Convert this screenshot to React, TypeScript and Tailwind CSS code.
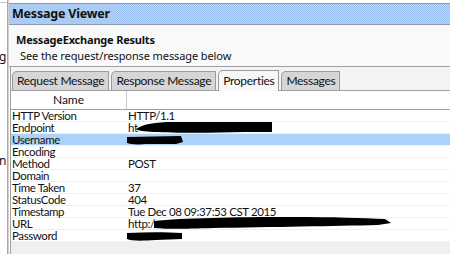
import React from "react";

const rows: { name: string; value: string; sel?: boolean; redact?: "endpoint" | "user" | "url" | "pass" }[] = [
  { name: "HTTP Version", value: "HTTP/1.1" },
  { name: "Endpoint", value: "ht", redact: "endpoint" },
  { name: "Username", value: "", sel: true, redact: "user" },
  { name: "Encoding", value: "" },
  { name: "Method", value: "POST" },
  { name: "Domain", value: "" },
  { name: "Time Taken", value: "37" },
  { name: "StatusCode", value: "404" },
  { name: "Timestamp", value: "Tue Dec 08 09:37:53 CST 2015" },
  { name: "URL", value: "http:/", redact: "url" },
  { name: "Password", value: "", redact: "pass" },
];

function Redaction({ kind }: { kind: string }) {
  if (kind === "endpoint")
    return (
      <svg className="absolute left-[8px] top-[-2px]" width="140" height="14" viewBox="0 0 140 14">
        <path d="M2 9 C10 4 20 2 40 2 L138 2 L138 12 L110 12 C80 13 40 13 20 12 C10 11 4 11 2 9 Z" fill="#000" />
      </svg>
    );
  if (kind === "user")
    return (
      <svg className="absolute left-[0px] top-[1px]" width="60" height="11" viewBox="0 0 60 11">
        <path d="M1 2 L55 1 L57 7 L50 9 L20 9 C10 10 4 9 1 8 Z" fill="#000" />
      </svg>
    );
  if (kind === "url")
    return (
      <svg className="absolute left-[27px] top-[-3px]" width="242" height="16" viewBox="0 0 242 16">
        <path d="M1 6 C30 3 80 2 140 2 C180 2 210 3 232 4 L238 8 L225 10 C180 11 120 12 60 13 C30 14 8 14 1 13 Z" fill="#000" />
      </svg>
    );
  return (
    <svg className="absolute left-[0px] top-[1px]" width="58" height="11" viewBox="0 0 58 11">
      <path d="M1 2 C20 1 40 1 56 2 L56 8 L30 9 C15 10 5 10 1 8 Z" fill="#000" />
    </svg>
  );
}

export default function App() {
  return (
    <div
      className="w-[450px] h-[254px] flex bg-white overflow-hidden text-[#111]"
      style={{ fontFamily: '"Noto Sans", "Open Sans", sans-serif' }}
    >
      {/* left neighbour pane */}
      <div className="w-[8px] shrink-0 flex flex-col border-r border-[#a8a8a8] bg-white overflow-hidden">
        <div className="h-[3px] border-b border-[#c8c8c8]" />
        <div className="h-[48px]" />
        <div className="text-[12px] leading-[12px] -ml-[1px]">g</div>
        <div className="h-[92px]" />
        <div className="text-[12px] leading-[12px] -ml-[1px]">n</div>
      </div>

      {/* main window */}
      <div className="flex-1 flex flex-col border-l border-[#d0d0d0] min-w-0">
        <div className="h-[3px] bg-white" />
        {/* title bar */}
        <div className="h-[22px] flex items-center border-t border-b border-[#8c9aae] bg-[repeating-conic-gradient(#95bdef_0_25%,#c2daf7_0_50%)] bg-[length:2px_2px]">
          <div className="h-full flex items-center pl-[3px] pr-[6px] bg-[#abcbf2] text-[12.5px] font-bold tracking-[-0.2px]">
            Message Viewer
          </div>
        </div>
        {/* description */}
        <div className="h-[42px] bg-[#f9f9f9] flex flex-col pl-[7px] border-b border-[#a0a0a0]">
          <div className="mt-[8px] text-[11px] leading-[14px] font-bold tracking-[-0.2px]">MessageExchange Results</div>
          <div className="mt-[2px] pl-[4px] text-[11px] leading-[14px] tracking-[-0.1px]">See the request/response message below</div>
        </div>

        {/* tab panel */}
        <div
          className="flex-1 flex flex-col ml-[1px] border-l border-[#a0a0a0] bg-[#f3f3f3]"
          style={{ fontFamily: 'Lato, "Noto Sans", sans-serif' }}
        >
          <div className="h-[24px] flex items-end pl-[1px] border-b border-[#a0a0a0]">
            {["Request Message", "Response Message", "Properties", "Messages"].map((t) => {
              const sel = t === "Properties";
              return (
                <div
                  key={t}
                  className={
                    "relative mr-[2px] flex items-center px-[4px] text-[12px] tracking-[-0.3px] leading-[14px] border border-b-0 border-[#9a9a9a] rounded-tl-[5px] " +
                    (sel ? "h-[21px] bg-[#f7f7f7] -mb-[1px]" : "h-[19px] bg-[#d6d6d6]")
                  }
                >
                  {t}
                </div>
              );
            })}
          </div>

          {/* table */}
          <div className="flex flex-col bg-white">
            <div className="h-[19px] flex border-b border-[#a0a0a0]">
              <div className="w-[115px] shrink-0 flex items-center justify-center text-[12px]">Name</div>
              <div className="flex-1 border-l border-[#c8c8c8]" />
            </div>
            {rows.map((r) => (
              <div
                key={r.name}
                className={
                  "h-[12px] flex text-[11.5px] tracking-[-0.4px] leading-[12px] border-b border-[#f0f0f0] " +
                  (r.sel ? "bg-[#abd2f8]" : "")
                }
              >
                <div className="w-[115px] shrink-0 pl-[1px] whitespace-nowrap">{r.name}</div>
                <div className="relative flex-1 pl-[2px] whitespace-nowrap">
                  {r.value}
                  {r.redact && <Redaction kind={r.redact} />}
                </div>
              </div>
            ))}
          </div>
          <div className="flex-1 bg-[#efefef]" />
        </div>
      </div>
    </div>
  );
}
